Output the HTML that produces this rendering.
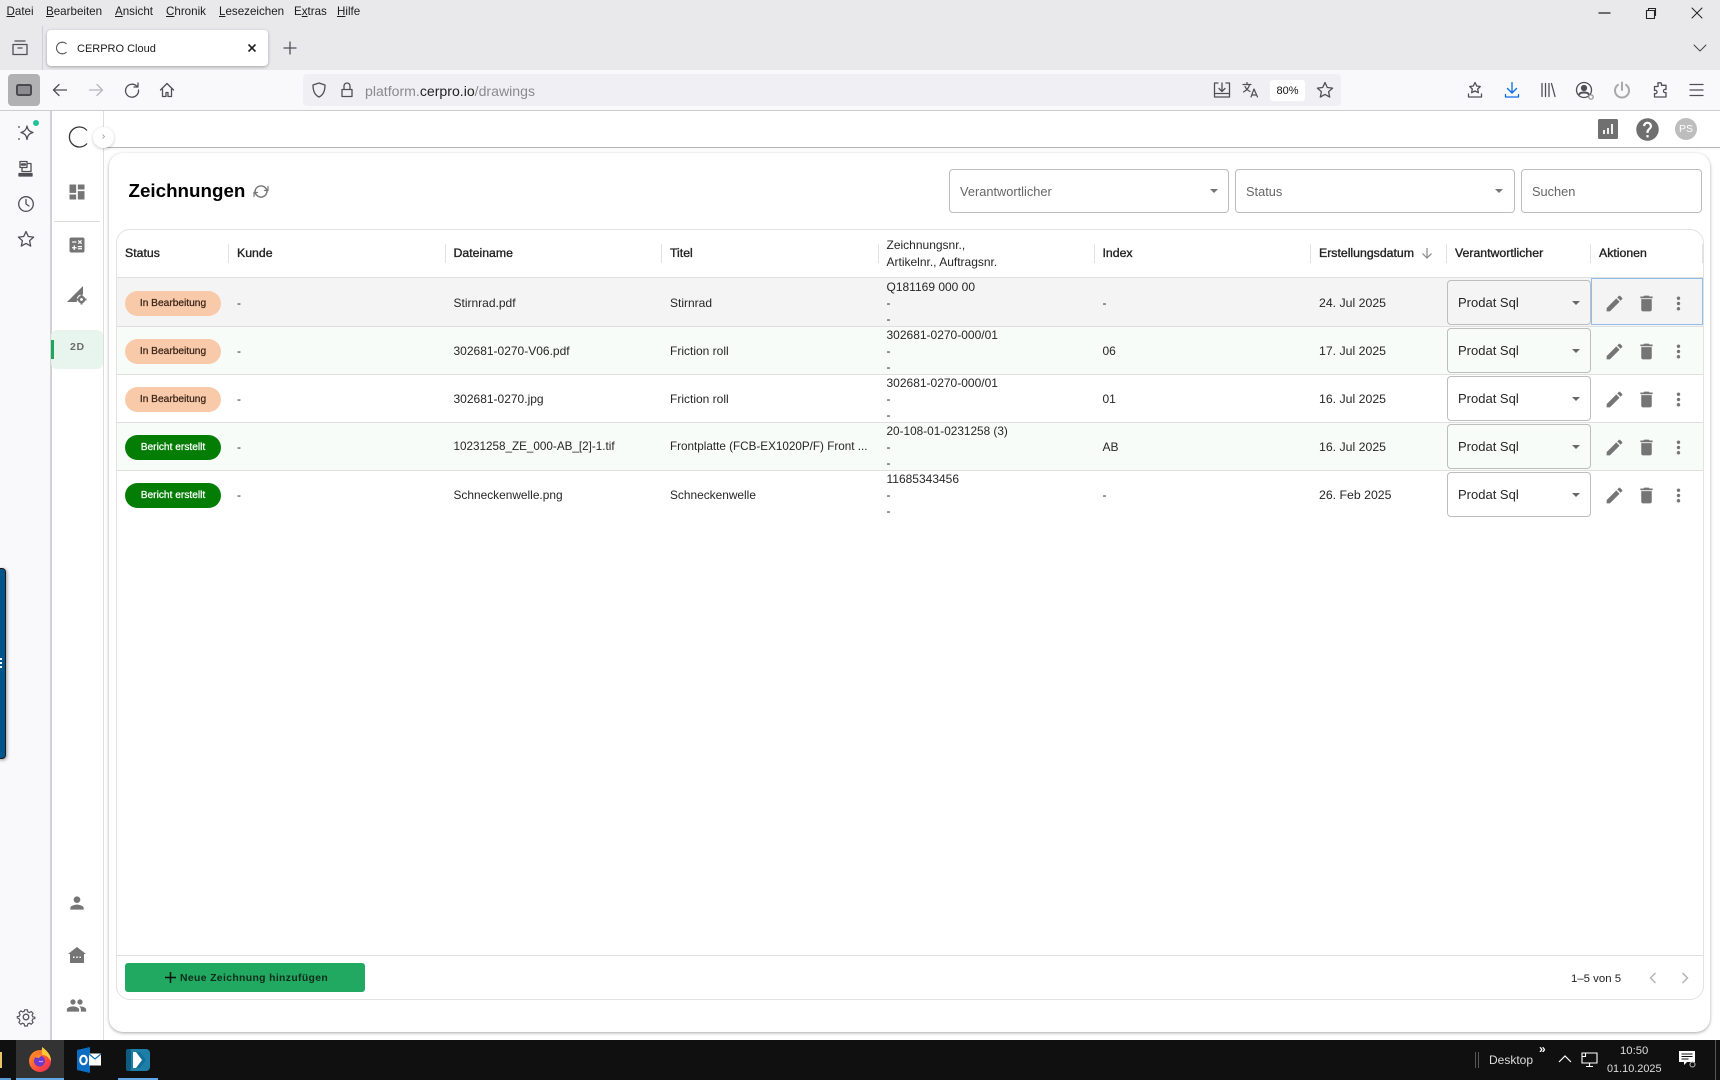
<!DOCTYPE html>
<html lang="de"><head><meta charset="utf-8"><title>CERPRO Cloud</title>
<style>
*{box-sizing:border-box}
html,body{margin:0;padding:0;width:1720px;height:1080px;overflow:hidden;background:#fff;font-family:"Liberation Sans",sans-serif;color:#222}
.a,.t,svg.i{position:absolute}
.t{white-space:nowrap;line-height:16px;height:16px;font-size:12px;color:#262626}
.m{font-size:11.6px;color:#1c1c1c;top:4px;line-height:16px}
.m u{text-decoration:underline}
.h{-webkit-text-stroke:.35px #222;color:#222;font-size:12.3px}
.sel{position:absolute;border:1px solid #bdbdbd;border-radius:4px}
.arr{position:absolute;width:0;height:0;border-left:4px solid transparent;border-right:4px solid transparent;border-top:4px solid #757575}
.pill{position:absolute;left:125px;width:96px;height:25px;border-radius:13px;text-align:center;line-height:26px;font-size:10.2px;-webkit-text-stroke:.25px currentColor}
.o{background:#f8caaa;color:#3a2418}
.g{background:#047d04;color:#fff}
.dv{position:absolute;top:244px;width:1px;height:19px;background:#e2e2e2}
.ln{position:absolute;left:117px;width:1586px;height:1px;background:#dfdfdf}
.row{position:absolute;left:117px;width:1586px;height:48px}
svg.i{fill:#757575}
svg.i.s{fill:none;stroke:#4f4f55;stroke-width:1.3;stroke-linecap:round;stroke-linejoin:round}
</style></head><body>

<!-- Tab strip -->
<div class="a" style="left:0;top:0;width:1720px;height:70px;background:#e9e9ec"></div>
<div class="t m" style="left:6.5px"><u>D</u>atei</div>
<div class="t m" style="left:46px"><u>B</u>earbeiten</div>
<div class="t m" style="left:115px"><u>A</u>nsicht</div>
<div class="t m" style="left:166px"><u>C</u>hronik</div>
<div class="t m" style="left:219px"><u>L</u>esezeichen</div>
<div class="t m" style="left:294px">E<u>x</u>tras</div>
<div class="t m" style="left:337px"><u>H</u>ilfe</div>

<svg class="i s" style="left:10px;top:39px" width="20" height="18" viewBox="0 0 20 18"><path d="M5 2h10M3 5.500h14v10H3zM8 9h4"/></svg>
<div class="a" style="left:42px;top:26px;width:1px;height:44px;background:#d0d0d4"></div>
<div class="a" style="left:47px;top:30px;width:221px;height:36px;background:#fff;border-radius:4px;box-shadow:0 1px 3px rgba(0,0,0,.3)"></div>
<svg class="i" style="left:55px;top:41px;fill:none;stroke:#555;stroke-width:1.100" width="14" height="14" viewBox="0 0 14 14"><path d="M11.500 3A5.800 5.800 0 1 0 11.500 11"/></svg>
<div class="t" style="left:77px;top:41px;font-size:11px;color:#1c1c1c">CERPRO Cloud</div>
<svg class="i" style="left:247px;top:43px;fill:none;stroke:#222;stroke-width:1.600" width="10" height="10" viewBox="0 0 10 10"><path d="M1.500 1.500l7 7M8.500 1.500l-7 7"/></svg>
<svg class="i s" style="left:283px;top:41px" width="14" height="14" viewBox="0 0 14 14"><path d="M7 1v12M1 7h12"/></svg>
<svg class="i s" style="left:1598px;top:7px;stroke:#222" width="14" height="12"><path d="M1 6h11"/></svg>
<svg class="i s" style="left:1645px;top:7px;stroke:#222;stroke-width:1.100" width="12" height="13" viewBox="0 0 12 13"><path d="M1.500 3.500h8v8h-8zM3.500 3.500V1.500h7v7h-1"/></svg>
<svg class="i s" style="left:1691px;top:7px;stroke:#222;stroke-width:1" width="12" height="12"><path d="M1 1l10 10M11 1L1 11"/></svg>
<svg class="i s" style="left:1693px;top:43px;stroke:#444;stroke-width:1" width="14" height="10"><path d="M1 2l6 6 6-6"/></svg>

<!-- Toolbar -->
<div class="a" style="left:0;top:70px;width:1720px;height:41px;background:#f9f9fb;border-bottom:1px solid #ccc"></div>
<div class="a" style="left:8px;top:74px;width:32px;height:32px;background:#b1b1b3;border-radius:4px"></div>
<div class="a" style="left:16px;top:84px;width:16px;height:12px;background:#8c8c90;border:2px solid #4a4a4e;border-radius:2.500px"></div>
<svg class="i s" style="left:52px;top:82px" width="16" height="16" viewBox="0 0 16 16"><path d="M14.500 8h-13M7 2.500L1.500 8 7 13.500"/></svg>
<svg class="i s" style="left:88px;top:82px;stroke:#b9b9bd" width="16" height="16" viewBox="0 0 16 16"><path d="M1.500 8h13M9 2.500L14.500 8 9 13.500"/></svg>
<svg class="i s" style="left:124px;top:82px" width="16" height="16" viewBox="0 0 16 16"><path d="M13 4.500A6.500 6.500 0 1 0 14.500 8M14 1v4h-4"/></svg>
<svg class="i s" style="left:159px;top:82px" width="16" height="16" viewBox="0 0 16 16"><path d="M1.500 8L8 1.500 14.500 8M3.500 7v7.500h3.500v-4h2v4h3.500V7"/></svg>
<div class="a" style="left:303px;top:74px;width:1038px;height:32px;background:#f0f0f4;border-radius:4px"></div>
<svg class="i s" style="left:311px;top:82px" width="16" height="16" viewBox="0 0 16 16"><path d="M8 1L2 3c0 6 1.500 10 6 12 4.500-2 6-6 6-12z"/></svg>
<svg class="i s" style="left:339px;top:81px" width="16" height="18" viewBox="0 0 16 18"><path d="M3 8.500h10v7H3zM5 8.500V5a3 3 0 0 1 6 0v3.500"/></svg>
<div class="t" style="left:365px;top:83px;font-size:14.100px;color:#8a8a8e">platform.<span style="color:#222">cerpro.io</span>/drawings</div>
<svg class="i s" style="left:1213px;top:81px" width="18" height="18" viewBox="0 0 18 18"><path d="M5 2H1.500v14h15V2H13M1.500 12.500h15M9 2v8M6 7.500L9 10.500l3-3"/></svg>
<svg class="i s" style="left:1242px;top:81px;stroke-width:1.200" width="18" height="18" viewBox="0 0 18 18"><path d="M1 3.500h8M5 1.500v2M7.500 3.500C7 7 4 9.500 1.500 11M3 5.500c1 2 3 4 5 5M9 16l3-8 3.500 8M10 14h4.500"/></svg>
<div class="a" style="left:1270px;top:80px;width:35px;height:21px;background:#fff;border-radius:3px;text-align:center;line-height:22px;font-size:11px;color:#111">80%</div>
<svg class="i s" style="left:1316px;top:81px" width="18" height="18" viewBox="0 0 18 18"><path d="M9 1.500l2.300 5 5.300.6-4 3.600 1.100 5.400L9 13.400l-4.700 2.700 1.100-5.400-4-3.600 5.300-.6z"/></svg>
<svg class="i s" style="left:1466px;top:81px" width="18" height="18" viewBox="0 0 18 18"><path d="M9 1.500l1.700 3.500 3.600.5-2.600 2.500.7 3.700L9 10l-3.400 1.700.7-3.700-2.600-2.500 3.600-.5zM2.500 13v3h13v-3"/></svg>
<svg class="i s" style="left:1502.500px;top:81px;stroke:#0a6cde" width="18" height="18" viewBox="0 0 18 18"><path d="M9 1.500v10M4.500 7.500l4.500 4.500 4.500-4.500M2.500 13.500v2.500h13v-2.500"/></svg>
<svg class="i s" style="left:1539px;top:81px" width="18" height="18" viewBox="0 0 18 18"><path d="M3 2.500v13M6.500 2.500v13M10 2.500v13M12.500 2.500l3.500 13"/></svg>
<svg class="i s" style="left:1575px;top:81px" width="20" height="20" viewBox="0 0 20 20"><circle cx="9" cy="9" r="7.500"/><circle cx="9" cy="7" r="2.500" style="fill:#4f4f55"/><path d="M4.500 13c1-2 8-2 9 0" stroke-width="2"/><circle cx="16" cy="16" r="2.200" style="stroke:#999;fill:#f9f9fb"/></svg>
<svg class="i s" style="left:1613px;top:81px;stroke:#a9a9ac;stroke-width:2" width="18" height="18" viewBox="0 0 18 18"><path d="M9 1.500v7.500M5 3.800a7 7 0 1 0 8 0"/></svg>
<svg class="i s" style="left:1651px;top:81px" width="18" height="18" viewBox="0 0 18 18"><path d="M7 1.800h2.500c1 0 1 1 1 2.500H15v4.200c-2-.5-2.500.5-2.500 1.500s.5 2 2.500 1.500V16H3.500v-3.500c2 .5 2.500-.5 2.500-1.500S5.500 9 3.500 9.500V5.500H7c.5-1.500-.5-3.700 0-3.700z"/></svg>
<svg class="i s" style="left:1688px;top:81px" width="17" height="18" viewBox="0 0 17 18"><path d="M2 3.500h13M2 9h13M2 14.500h13"/></svg>

<!-- Browser sidebar -->
<div class="a" style="left:0;top:111px;width:51px;height:929px;background:#f9f9fb;border-right:1px solid #d4d4d6"></div>
<svg class="i s" style="left:16px;top:123px" width="20" height="20" viewBox="0 0 20 20"><path d="M11 3c.6 3.600 2 5.500 6 6.500-3.900 1-5.400 2.900-6 7-.6-4-2.100-6-6-7 3.900-1 5.400-2.900 6-6.500z"/><circle cx="3" cy="4" r="1" style="fill:#777;stroke:none"/><circle cx="3" cy="16" r="1" style="fill:#777;stroke:none"/></svg>
<div class="a" style="left:33px;top:120px;width:6px;height:6px;border-radius:50%;background:#1fc29a"></div>
<svg class="i s" style="left:17px;top:160px" width="18" height="18" viewBox="0 0 18 18"><path d="M3 1.500h7v6H3zM10 3.500h4v8M5 7.500v4h9"/><path d="M2 13.500h13v2.500H2z" style="fill:#4f4f55"/><path d="M5 4.500h3" stroke-width="2.500"/></svg>
<svg class="i s" style="left:17px;top:195px" width="18" height="18" viewBox="0 0 18 18"><circle cx="9" cy="9" r="7.300"/><path d="M9 4.500V9l3 2"/></svg>
<svg class="i s" style="left:17px;top:230px" width="18" height="18" viewBox="0 0 18 18"><path d="M9 1.500l2.300 5 5.300.6-4 3.600 1.100 5.400L9 13.400l-4.700 2.700 1.100-5.400-4-3.600 5.300-.6z"/></svg>
<svg class="i" style="left:16px;top:1007px;fill:none;stroke:#55555a;stroke-width:1.300" width="20" height="20" viewBox="0 0 20 20"><circle cx="10" cy="10" r="2.800"/><path d="M8.500 2h3l.5 2.300 1.800.8 2-1.200 2.100 2.100-1.200 2 .8 1.800 2.300.5v1.400l-2.300.5-.8 1.800 1.200 2-2.100 2.100-2-1.200-1.800.8-.5 2.300h-3l-.5-2.300-1.800-.8-2 1.200-2.100-2.100 1.200-2-.8-1.800L.3 11V9.600l2.300-.5.800-1.800-1.200-2 2.100-2.100 2 1.200 1.800-.8z" transform="translate(1 1) scale(.9)"/></svg>

<!-- App nav -->
<div class="a" style="left:51px;top:111px;width:53px;height:929px;background:#fff;border-right:1px solid #dedede;border-left:1px solid #d0d0d0"></div>
<div class="a" style="left:103px;top:147px;width:1617px;height:1px;background:#b5b5b5;box-shadow:0 1px 2px rgba(0,0,0,.08)"></div>
<svg class="i" style="left:68px;top:125px;fill:none;stroke:#333;stroke-width:1.300" width="22" height="24" viewBox="0 0 22 24"><path d="M19 5.500A10 10 0 1 0 19 18.500"/></svg>
<div class="a" style="left:93px;top:127px;width:21px;height:21px;border-radius:50%;background:#fff;box-shadow:0 1px 3px rgba(0,0,0,.22);color:#888;font-size:10px;line-height:19px;text-align:center">›</div>
<svg class="i" style="left:67px;top:182px" width="20" height="20" viewBox="0 0 24 24"><path d="M3 13h8V3H3v10zm0 8h8v-6H3v6zm10 0h8V11h-8v10zm0-18v6h8V3h-8z"/></svg>
<div class="a" style="left:54px;top:221px;width:46px;height:1px;background:#dcdcdc"></div>
<svg class="i" style="left:67px;top:235px" width="20" height="20" viewBox="0 0 24 24"><path d="M19 3H5c-1.100 0-2 .9-2 2v14c0 1.100.9 2 2 2h14c1.100 0 2-.9 2-2V5c0-1.100-.9-2-2-2zm-5.970 4.060L14.090 6l1.410 1.410L16.910 6l1.060 1.060-1.410 1.410 1.410 1.410-1.060 1.060-1.410-1.400-1.410 1.410-1.060-1.060 1.410-1.410-1.410-1.420zm-6.780.66h5v1.500h-5v-1.500zM11.500 16h-2v2H8v-2H6v-1.500h2v-2h1.500v2h2V16zm6.500 1.250h-5v-1.500h5v1.500zm0-2.500h-5v-1.500h5v1.500z"/></svg>
<svg class="i" style="left:66px;top:284px" width="22" height="22" viewBox="0 0 22 22"><path d="M1 18L17 2v8.500a5.500 5.500 0 0 0-6 7.500z"/><circle cx="15.500" cy="15.500" r="3.800"/><circle cx="15.500" cy="15.500" r="1.400" fill="#fff"/><path d="M14.500 10.500h2v2h-2zM14.500 18.500h2v2h-2zM10.500 14.500h2v2h-2zM18.500 14.500h2v2h-2z"/></svg>
<div class="a" style="left:51px;top:330px;width:52px;height:39px;background:#e8f5ee;border-radius:6px"></div>
<div class="a" style="left:51px;top:340px;width:3px;height:19px;background:#1da75c"></div>
<div class="t" style="left:70px;top:339px;font-size:10.500px;font-weight:bold;color:#6d6d6d;letter-spacing:.6px">2D</div>
<svg class="i" style="left:67px;top:893px" width="20" height="20" viewBox="0 0 24 24"><path d="M12 12c2.210 0 4-1.790 4-4s-1.790-4-4-4-4 1.790-4 4 1.790 4 4 4zm0 2c-2.670 0-8 1.340-8 4v2h16v-2c0-2.660-5.330-4-8-4z"/></svg>
<svg class="i" style="left:67px;top:947px" width="20" height="17" viewBox="0 0 20 17"><path d="M10 0L1 7h2v9h14V7h2z"/><path d="M6 9.500h1.500v1.500H6zM9.300 9.500h1.500v1.500H9.300zM12.500 9.500H14v1.500h-1.500z" fill="#fff"/></svg>
<svg class="i" style="left:66px;top:994.500px" width="21" height="21" viewBox="0 0 24 24"><path d="M16 11c1.660 0 2.990-1.340 2.990-3S17.660 5 16 5c-1.660 0-3 1.340-3 3s1.340 3 3 3zm-8 0c1.660 0 2.990-1.340 2.990-3S9.660 5 8 5C6.340 5 5 6.340 5 8s1.340 3 3 3zm0 2c-2.330 0-7 1.170-7 3.500V19h14v-2.500c0-2.330-4.670-3.500-7-3.500zm8 0c-.29 0-.62.020-.97.050 1.160.84 1.970 1.970 1.970 3.450V19h6v-2.500c0-2.330-4.670-3.500-7-3.500z"/></svg>

<!-- Header icons -->
<svg class="i" style="left:1598px;top:119px" width="20" height="20" viewBox="0 0 20 20"><rect width="20" height="20" rx="1.500" fill="#707070"/><path d="M5 11h2v4H5zM9 9h2v6H9zM13 5h2v10h-2z" fill="#fff" opacity=".9"/></svg>
<svg class="i" style="left:1634px;top:116px;fill:#6f6f6f" width="27" height="27" viewBox="0 0 24 24"><path d="M12 2C6.480 2 2 6.480 2 12s4.480 10 10 10 10-4.480 10-10S17.520 2 12 2zm1 17h-2v-2h2v2zm2.070-7.750l-.9.920C13.450 12.900 13 13.500 13 15h-2v-.5c0-1.100.45-2.100 1.170-2.830l1.240-1.260c.37-.36.590-.86.590-1.410 0-1.100-.9-2-2-2s-2 .9-2 2H8c0-2.210 1.790-4 4-4s4 1.790 4 4c0 .88-.36 1.680-.93 2.250z"/></svg>
<div class="a" style="left:1675px;top:118px;width:22px;height:22px;border-radius:50%;background:#bdbdbd;color:#fff;font-size:10.500px;text-align:center;line-height:22px">PS</div>

<!-- Main card -->
<div class="a" style="left:109px;top:153px;width:1601px;height:879px;background:#fff;border-radius:14px;box-shadow:0 1px 3px rgba(0,0,0,.35)"></div>
<div class="t" style="left:128.500px;top:180px;height:22px;line-height:22px;font-size:18.800px;font-weight:bold;color:#000">Zeichnungen</div>
<svg class="i" style="left:253px;top:184px;fill:none;stroke:#777;stroke-width:1.500;stroke-linecap:round" width="16" height="15" viewBox="0 0 16 15"><path d="M2 8a6 6 0 0 1 10.500-4l1.500 2M14 7a6 6 0 0 1-10.500 4L2 9"/><path d="M15 2.500V6.500H11.500M1 12.500V8.500h3.500" stroke-width="1.200"/></svg>

<div class="sel" style="left:949px;top:169px;width:280px;height:44px"></div>
<div class="t" style="left:960px;top:184px;font-size:12.800px;color:#666">Verantwortlicher</div>
<div class="arr" style="left:1210px;top:189px"></div>
<div class="sel" style="left:1235px;top:169px;width:280px;height:44px"></div>
<div class="t" style="left:1246px;top:184px;font-size:12.800px;color:#666">Status</div>
<div class="arr" style="left:1495px;top:189px"></div>
<div class="sel" style="left:1521px;top:169px;width:181px;height:44px"></div>
<div class="t" style="left:1532px;top:184px;font-size:12.800px;color:#666">Suchen</div>

<!-- Table frame -->
<div class="a" style="left:116px;top:229px;width:1588px;height:771px;border:1.500px solid #e2e2e2;border-radius:14px"></div>

<div class="row" style="top:278px;background:#f4f4f4"></div>
<div class="row" style="top:326px;background:#f8fcf9"></div>
<div class="row" style="top:422px;background:#f8fcf9"></div>
<div class="ln" style="top:277px"></div>
<div class="ln" style="top:326px"></div>
<div class="ln" style="top:374px"></div>
<div class="ln" style="top:422px"></div>
<div class="ln" style="top:470px"></div>
<div class="ln" style="top:955px"></div>

<!-- Header -->
<div class="dv" style="left:228px"></div><div class="dv" style="left:445px"></div><div class="dv" style="left:661px"></div><div class="dv" style="left:878px"></div><div class="dv" style="left:1094px"></div><div class="dv" style="left:1310px"></div><div class="dv" style="left:1446px"></div><div class="dv" style="left:1590px"></div><div class="dv" style="left:1702px"></div>
<div class="t h" style="left:125px;top:245px">Status</div>
<div class="t h" style="left:237px;top:245px">Kunde</div>
<div class="t h" style="left:453.500px;top:245px">Dateiname</div>
<div class="t h" style="left:670px;top:245px">Titel</div>
<div class="t" style="left:886.500px;top:237px;font-size:12px">Zeichnungsnr.,</div>
<div class="t" style="left:886.500px;top:254px;font-size:12px">Artikelnr., Auftragsnr.</div>
<div class="t h" style="left:1102.500px;top:245px">Index</div>
<div class="t h" style="left:1319px;top:245px">Erstellungsdatum</div>
<svg class="i" style="left:1421px;top:247px;fill:none;stroke:#888;stroke-width:1.200" width="12" height="12" viewBox="0 0 12 12"><path d="M6 1v10M1.500 6.500L6 11l4.500-4.500"/></svg>
<div class="t h" style="left:1455px;top:245px">Verantwortlicher</div>
<div class="t h" style="left:1599px;top:245px">Aktionen</div>

<!-- Row 1 -->
<div class="pill o" style="top:291px">In Bearbeitung</div>
<div class="t" style="left:237px;top:295px">-</div>
<div class="t" style="left:453.500px;top:295px">Stirnrad.pdf</div>
<div class="t" style="left:670px;top:295px">Stirnrad</div>
<div class="t" style="left:886.500px;top:279px">Q181169 000 00</div>
<div class="t" style="left:886.500px;top:295px">-</div>
<div class="t" style="left:886.500px;top:311px">-</div>
<div class="t" style="left:1102.500px;top:295px">-</div>
<div class="t" style="left:1319px;top:295px;font-size:12.300px">24. Jul 2025</div>
<div class="sel" style="left:1447px;top:280px;width:144px;height:45px"></div>
<div class="t" style="left:1458px;top:295px;font-size:13px">Prodat Sql</div>
<div class="arr" style="left:1572px;top:301px;border-top-color:#666"></div>
<div class="a" style="left:1591px;top:278px;width:112px;height:47px;border:1px solid #90bde9"></div>
<svg class="i" style="left:1604px;top:293px" width="21" height="21" viewBox="0 0 24 24"><path d="M3 17.250V21h3.750L17.810 9.940l-3.750-3.750L3 17.250zM20.710 7.040c.39-.39.39-1.020 0-1.410l-2.340-2.340c-.39-.39-1.020-.39-1.410 0l-1.830 1.830 3.750 3.750 1.830-1.830z"/></svg>
<svg class="i" style="left:1636px;top:293px" width="21" height="21" viewBox="0 0 24 24"><path d="M6 19c0 1.100.9 2 2 2h8c1.100 0 2-.9 2-2V7H6v12zM19 4h-3.500l-1-1h-5l-1 1H5v2h14V4z"/></svg>
<svg class="i" style="left:1668px;top:293px" width="21" height="21" viewBox="0 0 24 24"><path d="M12 8c1.100 0 2-.9 2-2s-.9-2-2-2-2 .9-2 2 .9 2 2 2zm0 2c-1.100 0-2 .9-2 2s.9 2 2 2 2-.9 2-2-.9-2-2-2zm0 6c-1.100 0-2 .9-2 2s.9 2 2 2 2-.9 2-2-.9-2-2-2z"/></svg>

<!-- Row 2 -->
<div class="pill o" style="top:339px">In Bearbeitung</div>
<div class="t" style="left:237px;top:343px">-</div>
<div class="t" style="left:453.500px;top:343px">302681-0270-V06.pdf</div>
<div class="t" style="left:670px;top:343px">Friction roll</div>
<div class="t" style="left:886.500px;top:327px">302681-0270-000/01</div>
<div class="t" style="left:886.500px;top:343px">-</div>
<div class="t" style="left:886.500px;top:359px">-</div>
<div class="t" style="left:1102.500px;top:343px">06</div>
<div class="t" style="left:1319px;top:343px;font-size:12.300px">17. Jul 2025</div>
<div class="sel" style="left:1447px;top:328px;width:144px;height:45px"></div>
<div class="t" style="left:1458px;top:343px;font-size:13px">Prodat Sql</div>
<div class="arr" style="left:1572px;top:349px;border-top-color:#666"></div>
<svg class="i" style="left:1604px;top:341px" width="21" height="21" viewBox="0 0 24 24"><path d="M3 17.250V21h3.750L17.810 9.940l-3.750-3.750L3 17.250zM20.710 7.040c.39-.39.39-1.020 0-1.410l-2.340-2.340c-.39-.39-1.020-.39-1.410 0l-1.830 1.830 3.750 3.750 1.830-1.830z"/></svg>
<svg class="i" style="left:1636px;top:341px" width="21" height="21" viewBox="0 0 24 24"><path d="M6 19c0 1.100.9 2 2 2h8c1.100 0 2-.9 2-2V7H6v12zM19 4h-3.500l-1-1h-5l-1 1H5v2h14V4z"/></svg>
<svg class="i" style="left:1668px;top:341px" width="21" height="21" viewBox="0 0 24 24"><path d="M12 8c1.100 0 2-.9 2-2s-.9-2-2-2-2 .9-2 2 .9 2 2 2zm0 2c-1.100 0-2 .9-2 2s.9 2 2 2 2-.9 2-2-.9-2-2-2zm0 6c-1.100 0-2 .9-2 2s.9 2 2 2 2-.9 2-2-.9-2-2-2z"/></svg>

<!-- Row 3 -->
<div class="pill o" style="top:387px">In Bearbeitung</div>
<div class="t" style="left:237px;top:391px">-</div>
<div class="t" style="left:453.500px;top:391px">302681-0270.jpg</div>
<div class="t" style="left:670px;top:391px">Friction roll</div>
<div class="t" style="left:886.500px;top:375px">302681-0270-000/01</div>
<div class="t" style="left:886.500px;top:391px">-</div>
<div class="t" style="left:886.500px;top:407px">-</div>
<div class="t" style="left:1102.500px;top:391px">01</div>
<div class="t" style="left:1319px;top:391px;font-size:12.300px">16. Jul 2025</div>
<div class="sel" style="left:1447px;top:376px;width:144px;height:45px"></div>
<div class="t" style="left:1458px;top:391px;font-size:13px">Prodat Sql</div>
<div class="arr" style="left:1572px;top:397px;border-top-color:#666"></div>
<svg class="i" style="left:1604px;top:389px" width="21" height="21" viewBox="0 0 24 24"><path d="M3 17.250V21h3.750L17.810 9.940l-3.750-3.750L3 17.250zM20.710 7.040c.39-.39.39-1.020 0-1.410l-2.340-2.340c-.39-.39-1.020-.39-1.410 0l-1.830 1.830 3.750 3.750 1.830-1.830z"/></svg>
<svg class="i" style="left:1636px;top:389px" width="21" height="21" viewBox="0 0 24 24"><path d="M6 19c0 1.100.9 2 2 2h8c1.100 0 2-.9 2-2V7H6v12zM19 4h-3.500l-1-1h-5l-1 1H5v2h14V4z"/></svg>
<svg class="i" style="left:1668px;top:389px" width="21" height="21" viewBox="0 0 24 24"><path d="M12 8c1.100 0 2-.9 2-2s-.9-2-2-2-2 .9-2 2 .9 2 2 2zm0 2c-1.100 0-2 .9-2 2s.9 2 2 2 2-.9 2-2-.9-2-2-2zm0 6c-1.100 0-2 .9-2 2s.9 2 2 2 2-.9 2-2-.9-2-2-2z"/></svg>

<!-- Row 4 -->
<div class="pill g" style="top:435px">Bericht erstellt</div>
<div class="t" style="left:237px;top:439px">-</div>
<div class="t" style="left:453.500px;top:439px;font-size:11.700px">10231258_ZE_000-AB_[2]-1.tif</div>
<div class="t" style="left:670px;top:439px;font-size:11.700px">Frontplatte (FCB-EX1020P/F) Front ...</div>
<div class="t" style="left:886.500px;top:423px;font-size:11.800px">20-108-01-0231258 (3)</div>
<div class="t" style="left:886.500px;top:439px">-</div>
<div class="t" style="left:886.500px;top:455px">-</div>
<div class="t" style="left:1102.500px;top:439px">AB</div>
<div class="t" style="left:1319px;top:439px;font-size:12.300px">16. Jul 2025</div>
<div class="sel" style="left:1447px;top:424px;width:144px;height:45px"></div>
<div class="t" style="left:1458px;top:439px;font-size:13px">Prodat Sql</div>
<div class="arr" style="left:1572px;top:445px;border-top-color:#666"></div>
<svg class="i" style="left:1604px;top:437px" width="21" height="21" viewBox="0 0 24 24"><path d="M3 17.250V21h3.750L17.810 9.940l-3.750-3.750L3 17.250zM20.710 7.040c.39-.39.39-1.020 0-1.410l-2.340-2.340c-.39-.39-1.020-.39-1.410 0l-1.830 1.830 3.750 3.750 1.830-1.830z"/></svg>
<svg class="i" style="left:1636px;top:437px" width="21" height="21" viewBox="0 0 24 24"><path d="M6 19c0 1.100.9 2 2 2h8c1.100 0 2-.9 2-2V7H6v12zM19 4h-3.500l-1-1h-5l-1 1H5v2h14V4z"/></svg>
<svg class="i" style="left:1668px;top:437px" width="21" height="21" viewBox="0 0 24 24"><path d="M12 8c1.100 0 2-.9 2-2s-.9-2-2-2-2 .9-2 2 .9 2 2 2zm0 2c-1.100 0-2 .9-2 2s.9 2 2 2 2-.9 2-2-.9-2-2-2zm0 6c-1.100 0-2 .9-2 2s.9 2 2 2 2-.9 2-2-.9-2-2-2z"/></svg>

<!-- Row 5 -->
<div class="pill g" style="top:483px">Bericht erstellt</div>
<div class="t" style="left:237px;top:487px">-</div>
<div class="t" style="left:453.500px;top:487px;font-size:11.900px">Schneckenwelle.png</div>
<div class="t" style="left:670px;top:487px;font-size:11.900px">Schneckenwelle</div>
<div class="t" style="left:886.500px;top:471px">11685343456</div>
<div class="t" style="left:886.500px;top:487px">-</div>
<div class="t" style="left:886.500px;top:503px">-</div>
<div class="t" style="left:1102.500px;top:487px">-</div>
<div class="t" style="left:1319px;top:487px;font-size:12.300px">26. Feb 2025</div>
<div class="sel" style="left:1447px;top:472px;width:144px;height:45px"></div>
<div class="t" style="left:1458px;top:487px;font-size:13px">Prodat Sql</div>
<div class="arr" style="left:1572px;top:493px;border-top-color:#666"></div>
<svg class="i" style="left:1604px;top:485px" width="21" height="21" viewBox="0 0 24 24"><path d="M3 17.250V21h3.750L17.810 9.940l-3.750-3.750L3 17.250zM20.710 7.040c.39-.39.39-1.020 0-1.410l-2.340-2.340c-.39-.39-1.020-.39-1.410 0l-1.830 1.830 3.750 3.750 1.830-1.830z"/></svg>
<svg class="i" style="left:1636px;top:485px" width="21" height="21" viewBox="0 0 24 24"><path d="M6 19c0 1.100.9 2 2 2h8c1.100 0 2-.9 2-2V7H6v12zM19 4h-3.500l-1-1h-5l-1 1H5v2h14V4z"/></svg>
<svg class="i" style="left:1668px;top:485px" width="21" height="21" viewBox="0 0 24 24"><path d="M12 8c1.100 0 2-.9 2-2s-.9-2-2-2-2 .9-2 2 .9 2 2 2zm0 2c-1.100 0-2 .9-2 2s.9 2 2 2 2-.9 2-2-.9-2-2-2zm0 6c-1.100 0-2 .9-2 2s.9 2 2 2 2-.9 2-2-.9-2-2-2z"/></svg>

<!-- Footer -->
<div class="a" style="left:125px;top:963px;width:240px;height:29px;background:#21a961;border-radius:3px"></div>
<svg class="i" style="left:164px;top:971px;fill:none;stroke:#111;stroke-width:1.500" width="13" height="13"><path d="M6.500 1v11M1 6.500h11"/></svg>
<div class="t" style="left:180px;top:971px;font-size:10.400px;font-weight:bold;color:#0f2b1a;letter-spacing:.36px">Neue Zeichnung hinzufügen</div>
<div class="t" style="left:1571px;top:971px;font-size:11.400px;color:#222">1–5 von 5</div>
<svg class="i" style="left:1648px;top:972px;fill:none;stroke:#b5b5b5;stroke-width:1.500" width="10" height="12"><path d="M7.500 1L2.500 6l5 5"/></svg>
<svg class="i" style="left:1680px;top:972px;fill:none;stroke:#b5b5b5;stroke-width:1.500" width="10" height="12"><path d="M2.500 1l5 5-5 5"/></svg>

<!-- Left edge tab -->
<div class="a" style="left:-4px;top:568px;width:10px;height:191px;background:#00558c;border:1px solid #1a1a1a;border-radius:4px;box-shadow:1px 1px 3px rgba(0,0,0,.4)"></div>
<div class="a" style="left:0;top:658px;width:2px;height:2px;background:#fff"></div>
<div class="a" style="left:0;top:662px;width:2px;height:2px;background:#fff"></div>
<div class="a" style="left:0;top:666px;width:2px;height:2px;background:#fff"></div>

<!-- Taskbar -->
<div class="a" style="left:0;top:1040px;width:1720px;height:40px;background:#101010"></div>
<div class="a" style="left:0;top:1052px;width:2px;height:16px;background:#e8c668"></div>
<div class="a" style="left:0;top:1078px;width:11px;height:2px;background:#5b9bd5"></div>
<div class="a" style="left:16px;top:1040px;width:48px;height:40px;background:#333"></div>
<div class="a" style="left:16px;top:1078px;width:48px;height:2px;background:#63a8e6"></div>
<svg class="i" style="left:28px;top:1047px" width="24" height="25" viewBox="0 0 24 25">
<defs><linearGradient id="ff" x1="0" y1="0" x2="1" y2="1"><stop offset="0" stop-color="#ff9a1f"/><stop offset=".6" stop-color="#ff4f3a"/><stop offset="1" stop-color="#e9226b"/></linearGradient></defs>
<circle cx="12" cy="14" r="11" fill="url(#ff)"/><path d="M14 0c4 3 9 7 9 14-2-3-5-6-8-6-2 0-1-5-1-8z" fill="#ffc93a"/><circle cx="11.500" cy="14" r="5.500" fill="#6d3bc8"/><path d="M6 10c2-3 6-3 8-2l-3 3z" fill="#ff8a26"/><path d="M11 14a3 3 0 0 0 4 0" stroke="#f9a0ff" fill="none"/></svg>
<svg class="i" style="left:77px;top:1047px" width="24" height="26" viewBox="0 0 24 26"><path d="M0 3l13-3v26L0 23z" fill="#0a6dc2"/><rect x="12" y="6.500" width="12" height="12" fill="#fff"/><path d="M12 7l6 5 6-5" fill="none" stroke="#0a6dc2" stroke-width="1.200"/><ellipse cx="6.500" cy="13" rx="3.300" ry="4.300" fill="none" stroke="#fff" stroke-width="2"/></svg>
<svg class="i" style="left:126px;top:1049px" width="24" height="22" viewBox="0 0 24 22"><rect width="24" height="22" rx="4" fill="#1d7fa8"/><rect x="0" y="0" width="5" height="22" rx="2" fill="#0d5c80"/><path d="M7 3h5l6 8-6 8H7z" fill="#fff"/><path d="M10 3h4l6 8-6 8h-4l6-8z" fill="#136e96"/></svg>
<div class="a" style="left:118px;top:1078px;width:40px;height:2px;background:#63a8e6"></div>
<div class="a" style="left:1475px;top:1052px;width:1px;height:16px;background:#555"></div>
<div class="a" style="left:1478px;top:1052px;width:1px;height:16px;background:#555"></div>
<div class="t" style="left:1489px;top:1052px;font-size:12px;color:#ddd">Desktop</div>
<div class="t" style="left:1539px;top:1041px;font-size:12px;color:#fff;font-weight:bold">»</div>
<svg class="i" style="left:1558px;top:1054px;fill:none;stroke:#fff;stroke-width:1.200" width="14" height="10"><path d="M1 8l6-6 6 6"/></svg>
<svg class="i" style="left:1581px;top:1052px;fill:none;stroke:#fff;stroke-width:1.100" width="17" height="16" viewBox="0 0 17 16"><path d="M4 1h12v10H1V5M8.500 11v3M5 14.500h7M1 1h3.500v3.500H1z"/></svg>
<div class="t" style="left:1620px;top:1043px;font-size:11.300px;color:#ddd">10:50</div>
<div class="t" style="left:1607px;top:1061px;font-size:10.900px;color:#ddd">01.10.2025</div>
<svg class="i" style="left:1679px;top:1051px" width="17" height="17" viewBox="0 0 17 17"><path d="M0 0h16v11H8l-3 3v-3H0z" fill="#fff"/><path d="M2.500 3h11M2.500 5.500h11M2.500 8h7" stroke="#101010"/><circle cx="13.500" cy="13.500" r="2.500" fill="none" stroke="#bbb"/></svg>
<div class="a" style="left:1715px;top:1040px;width:1px;height:40px;background:#555"></div>
</body></html>
